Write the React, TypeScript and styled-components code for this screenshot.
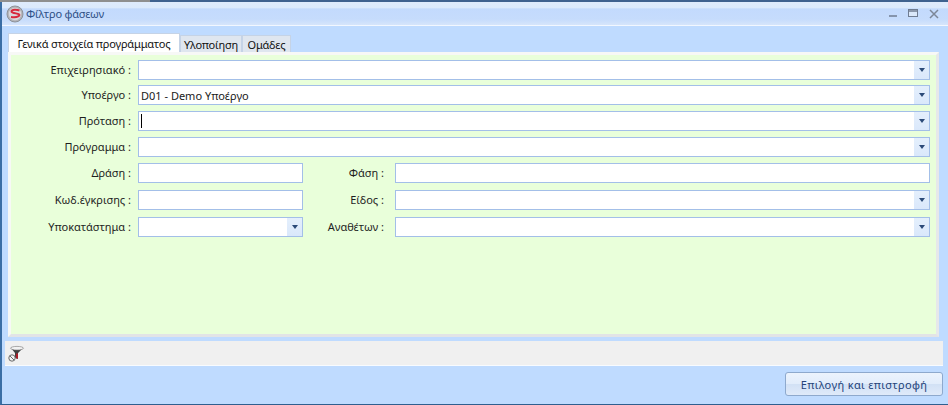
import React from "react";
import styled, { createGlobalStyle } from "styled-components";

const Global = createGlobalStyle`
  html, body { margin: 0; padding: 0; background: #bfdbff; }
  #root { width: 948px; height: 405px; }
  * { box-sizing: border-box; }
`;

const Win = styled.div`
  width: 948px; height: 405px; display: flex; flex-direction: column;
  background: #bfdbff; border-left: 2px solid #3a6ea5; border-bottom: 1px solid #2f5f8f;
  font-family: "Noto Sans", "DejaVu Sans", sans-serif; font-size: 11px; color: #1a1a1a;
`;
const TopEdge = styled.div`
  height: 2px; flex: none; margin-left: -2px;
  background: linear-gradient(to right, #8f8f8f 150px, #3f628f 150px);
`;
const TitleBar = styled.div`
  height: 24px; flex: none; display: flex; align-items: center; padding: 0 9px 0 4px; gap: 2px;
  background: linear-gradient(#dfebfc, #dceafc 25%, #c3dafd 30%, #c6dcfc 75%, #d6e5fb);
  border-bottom: 1px solid #f2f7ff;
`;
const Title = styled.span` color: #2e4f86; font-size: 11px; flex: 1; letter-spacing: -.2px; `;
const Controls = styled.div` display: flex; align-items: center; gap: 11px; `;
const Body = styled.div` flex: 1; display: flex; flex-direction: column; padding: 7px 5px 0 3px; min-height: 0; `;
const TabStrip = styled.div` display: flex; align-items: flex-end; height: 19px; flex: none; padding-left: 3px; `;
const Tab = styled.div<{ $active?: boolean; $w: number }>`
  width: ${p => p.$w}px;
  height: ${p => (p.$active ? "19px" : "17px")};
  display: flex; align-items: center; justify-content: center; font-size: 11px; color: #111; letter-spacing: -.2px;
  background: ${p => (p.$active ? "#ffffff" : "#dfe6ef")};
  border: 1px solid #c5d3e6; border-bottom: none; white-space: nowrap;
`;
const Panel = styled.div`
  height: 285px; flex: none; margin: 0 4px 0 3px; background: #e9ffda;
  border: 3px solid #f7f8f6; border-right-color: #e6e8ea; border-bottom-color: #e2e4e6;
  padding: 5px 6px 0 0; display: flex; flex-direction: column;
`;
const FieldRow = styled.div<{ $mb: number }>` display: flex; height: 20px; flex: none; margin-bottom: ${p => p.$mb}px; `;
const Label = styled.div<{ $w: number }>`
  width: ${p => p.$w}px; flex: none; text-align: right; padding-right: ${p => (p.$w > 100 ? 7 : 11)}px; line-height: 20px; font-size: 11px; color: #1e1e1e; white-space: nowrap;
`;
const Input = styled.div<{ $w?: number }>`
  ${p => (p.$w ? `width:${p.$w}px; flex:none;` : "flex:1;")}
  height: 20px; background: #fff; border: 1px solid #a3bfe8; display: flex; align-items: center; padding-left: 2px; font-size: 11px; color: #1a1a1a; min-width: 0;
`;
const Value = styled.span` flex: 1; `;
const Caret = styled.span` width: 1px; height: 14px; background: #000; `;
const Drop = styled.div`
  width: 15px; height: 18px; flex: none; display: flex; align-items: center; justify-content: center;
  background: linear-gradient(#e4effc, #dae8fb);
  &::after { content: ""; border-left: 3px solid transparent; border-right: 3px solid transparent; border-top: 4px solid #2b4a78; }
`;
const Status = styled.div`
  height: 25px; flex: none; margin: 4px 0 0 0; background: #f0f0f0; display: flex; align-items: center; padding-left: 2px; border-bottom: 1px solid #f8fbff;
`;
const Footer = styled.div` display: flex; justify-content: flex-end; margin-top: 6px; `;
const Button = styled.div`
  width: 158px; height: 24px; display: flex; align-items: center; justify-content: center;
  border: 1px solid #8ea9cd; border-radius: 3px; color: #24437a; font-size: 11px; letter-spacing: .35px;
  background: linear-gradient(#ecf3fd, #e2edfb 48%, #d2e1f5 52%, #dfeafa);
`;

const rows = [
  { l: "Επιχειρησιακό :", v: "", mb: 5 },
  { l: "Υποέργο :", v: "D01 - Demo Υποέργο", mb: 6 },
  { l: "Πρόταση :", v: "caret", mb: 6 },
  { l: "Πρόγραμμα :", v: "", mb: 6 },
];

export default function App() {
  return (
    <Win>
      <Global />
      <TopEdge />
      <TitleBar>
        <svg width="18" height="18" viewBox="0 0 18 18">
          <circle cx="9" cy="9" r="8" fill="#b4b4b8" stroke="#8d9299" />
          <circle cx="9" cy="9" r="6.2" fill="#d8d8dc" />
          <path d="M13.5 5.5c-3-1-7.5-1-8 .8s6 2 7.5 3-1 3.7-8 2.6" stroke="#d8283c" strokeWidth="2" fill="none" />
        </svg>
        <Title>Φίλτρο φάσεων</Title>
        <Controls>
          <svg width="8" height="8" viewBox="0 0 8 8"><path d="M0 6h8" stroke="#6f7c92" strokeWidth="1.5" /></svg>
          <svg width="10" height="9" viewBox="0 0 10 9"><rect x=".5" y=".5" width="9" height="7" fill="#dae8fb" stroke="#6f7c92" /><path d="M0 2h10" stroke="#6f7c92" strokeWidth="1.5" /></svg>
          <svg width="10" height="10" viewBox="0 0 10 10"><path d="M1 1l8 8M9 1l-8 8" stroke="#7c8798" strokeWidth="1.5" /></svg>
        </Controls>
      </TitleBar>
      <Body>
        <TabStrip>
          <Tab $active $w={172}>Γενικά στοιχεία προγράμματος</Tab>
          <Tab $w={62}>Υλοποίηση</Tab>
          <Tab $w={49}>Ομάδες</Tab>
        </TabStrip>
        <Panel>
          {rows.map(({ l, v, mb }) => (
            <FieldRow key={l} $mb={mb}>
              <Label $w={127}>{l}</Label>
              <Input>
                {v === "caret" ? <Caret /> : null}
                <Value>{v === "caret" ? "" : v}</Value>
                <Drop />
              </Input>
            </FieldRow>
          ))}
          <FieldRow $mb={7}>
            <Label $w={127}>Δράση :</Label>
            <Input $w={165} />
            <Label $w={92}>Φάση :</Label>
            <Input />
          </FieldRow>
          <FieldRow $mb={7}>
            <Label $w={127}>Κωδ.έγκρισης :</Label>
            <Input $w={165} />
            <Label $w={92}>Είδος :</Label>
            <Input><Value /><Drop /></Input>
          </FieldRow>
          <FieldRow $mb={0}>
            <Label $w={127}>Υποκατάστημα :</Label>
            <Input $w={165}><Value /><Drop /></Input>
            <Label $w={92}>Αναθέτων :</Label>
            <Input><Value /><Drop /></Input>
          </FieldRow>
        </Panel>
        <Status>
          <svg width="18" height="17" viewBox="0 0 18 17">
            <path d="M4 3h12l-5 5v6l-3-1V8z" fill="#3f3f3f" />
            <ellipse cx="10" cy="3.2" rx="6.5" ry="1.8" fill="#f2f2f2" stroke="#777" strokeWidth=".6" />
            <path d="M10 8.5v5" stroke="#d01020" strokeWidth="1.5" />
            <circle cx="5" cy="13" r="3.2" fill="#f2f2f2" stroke="#6a6a6a" />
            <path d="M3 11l4 4" stroke="#6a6a6a" />
          </svg>
        </Status>
        <Footer>
          <Button>Επιλογή και επιστροφή</Button>
        </Footer>
      </Body>
    </Win>
  );
}
